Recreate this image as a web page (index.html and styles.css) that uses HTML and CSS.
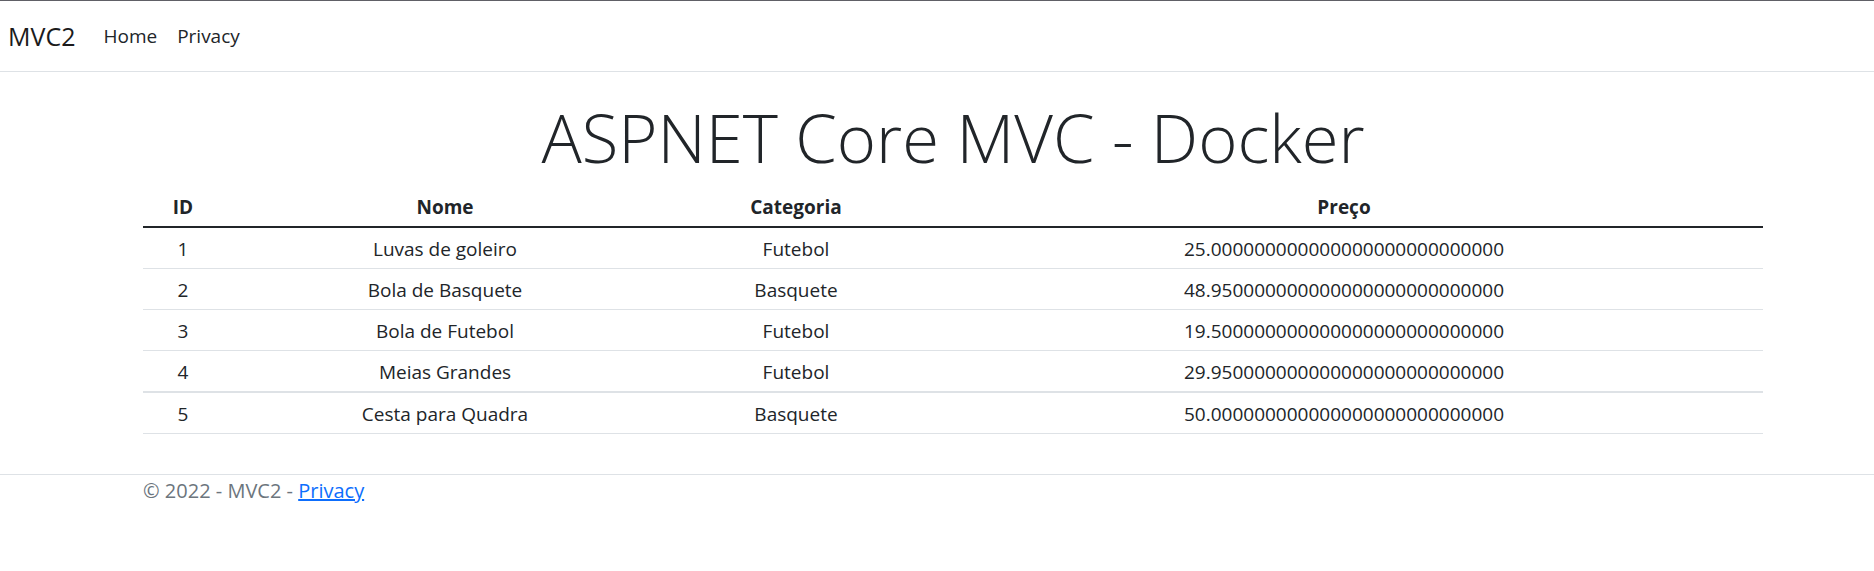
FILE: index.html
```html
<!DOCTYPE html>
<html lang="pt-BR">
<head>
<meta charset="utf-8">
<title>MVC2</title>
<link rel="stylesheet" href="styles.css">
</head>
<body>
<header class="header">
  <nav class="navbar">
    <a class="brand" href="#">MVC2</a>
    <a class="nav-link" href="#">Home</a>
    <a class="nav-link" href="#">Privacy</a>
  </nav>
</header>
<main class="container">
  <h1 class="title">ASPNET Core MVC - Docker</h1>
  <table class="table">
    <colgroup>
      <col class="col-id"><col class="col-name"><col class="col-category"><col class="col-price">
    </colgroup>
    <thead>
      <tr><th scope="col">ID</th><th scope="col">Nome</th><th scope="col">Categoria</th><th scope="col">Preço</th></tr>
    </thead>
    <tbody>
      <tr><td>1</td><td>Luvas de goleiro</td><td>Futebol</td><td>25.000000000000000000000000000</td></tr>
      <tr><td>2</td><td>Bola de Basquete</td><td>Basquete</td><td>48.950000000000000000000000000</td></tr>
      <tr><td>3</td><td>Bola de Futebol</td><td>Futebol</td><td>19.500000000000000000000000000</td></tr>
      <tr class="row-ruled"><td>4</td><td>Meias Grandes</td><td>Futebol</td><td>29.950000000000000000000000000</td></tr>
      <tr><td>5</td><td>Cesta para Quadra</td><td>Basquete</td><td>50.000000000000000000000000000</td></tr>
    </tbody>
  </table>
</main>
<footer class="footer">
  <div class="container">© 2022 - MVC2 - <a class="footer-link" href="#">Privacy</a></div>
</footer>
</body>
</html>
```
FILE: styles.css
```css
* {
  box-sizing: border-box;
}

body {
  margin: 0;
  background: #fff;
  color: #212529;
  font-family: "Segoe UI", "Open Sans", "Noto Sans", sans-serif;
  font-size: 19px;
  line-height: 30px;
}

.header {
  border-top: 1px solid #606066;
  border-bottom: 1px solid #dee2e6;
}

.navbar {
  display: flex;
  align-items: center;
  height: 70px;
  padding: 0 8px;
}

.brand {
  margin-right: 18px;
  color: #1b1b1b;
  font-size: 25px;
  text-decoration: none;
}

.nav-link {
  padding: 0 10px;
  color: #212529;
  text-decoration: none;
}

.container {
  width: calc(100% - 254px);
  max-width: 1620px;
  margin-left: 143px;
}

.title {
  margin: 0;
  padding: 23px 0 7px;
  font-size: 67px;
  font-weight: 300;
  line-height: 84px;
  text-align: center;
}

.table {
  width: 100%;
  border-collapse: collapse;
  table-layout: fixed;
  text-align: center;
}

.col-id { width: 80px; }
.col-name { width: 444px; }
.col-category { width: 258px; }

.table th,
.table td {
  padding: 6px 5px 4px;
  border-bottom: 1px solid #dee2e6;
}

.table th {
  border-bottom: 2px solid #212529;
  font-weight: 700;
}

.table .row-ruled td {
  border-bottom-width: 2px;
}

.footer {
  margin-top: 40px;
  padding-top: 1px;
  border-top: 1px solid #dee2e6;
  color: #6c757d;
  font-size: 20px;
}

.footer-link {
  color: #0d6efd;
}
```
